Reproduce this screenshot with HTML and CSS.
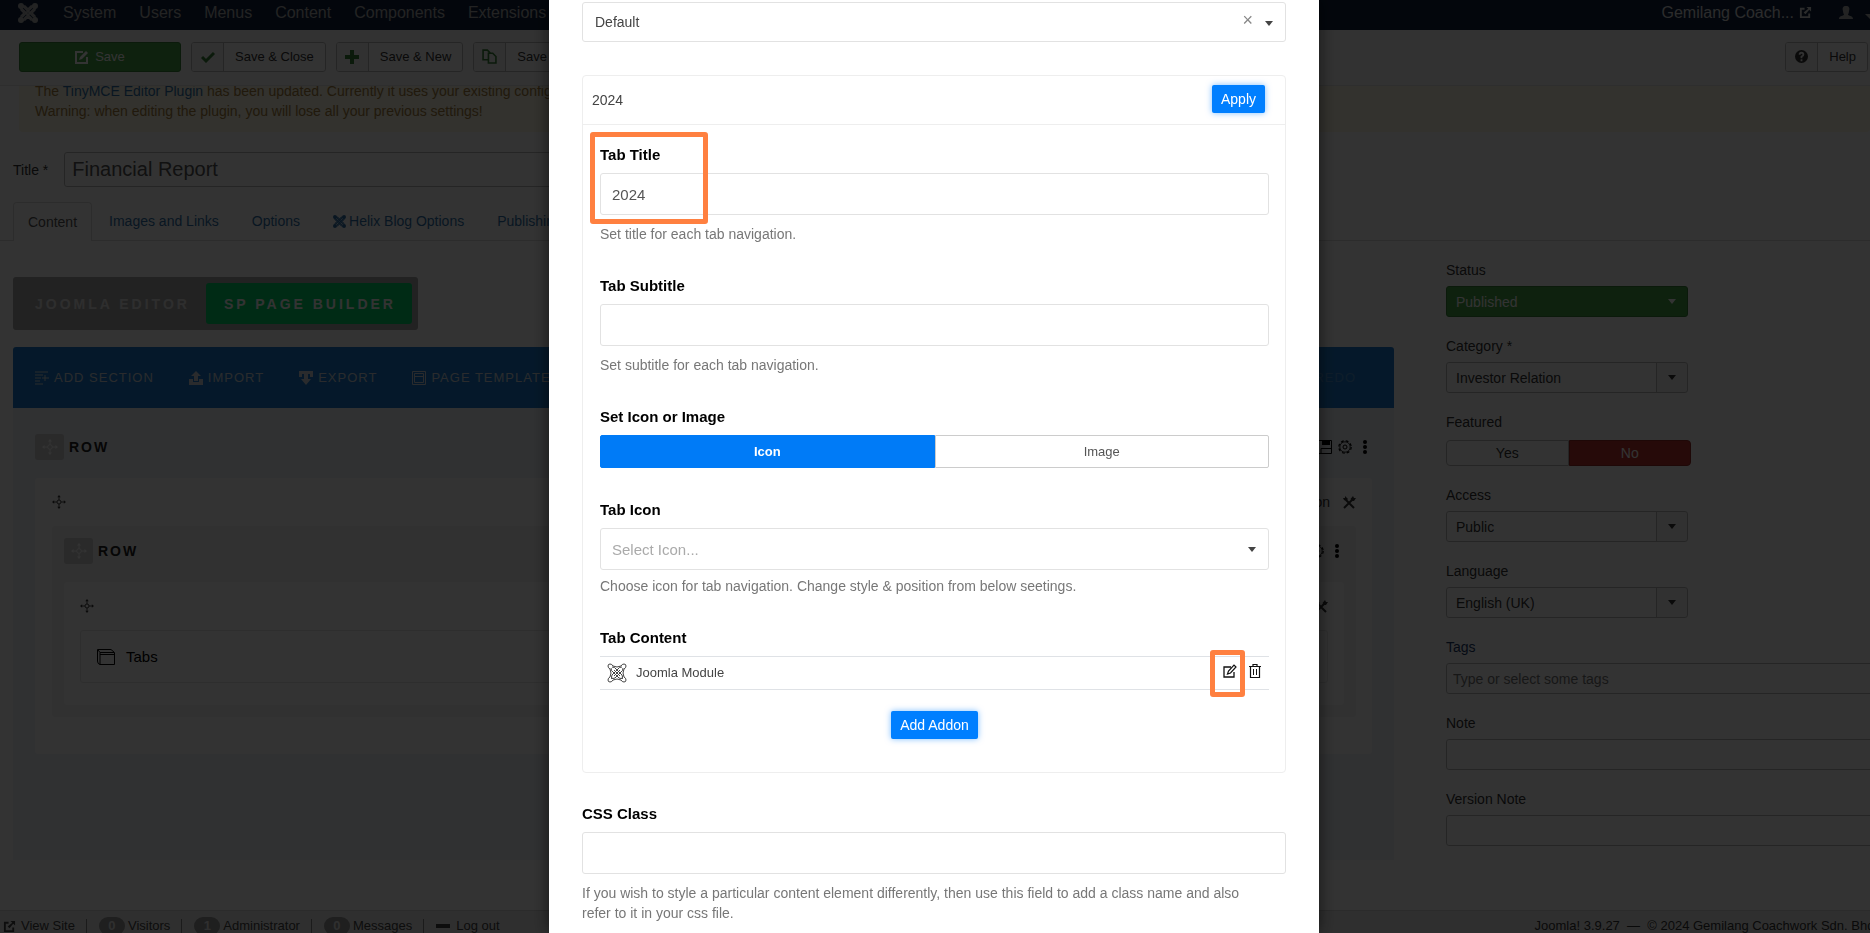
FILE: index.html
```
<!DOCTYPE html>
<html lang="en">
<head>
    <meta charset="UTF-8">
    <meta name="viewport" content="width=device-width, initial-scale=1.0">
    <title>Articles: Edit - Financial Report</title>
    <link rel="stylesheet" href="styles.css">
</head>
<body>

<!-- Icons -->
<svg width="0" height="0" class="icon-defs">
    <symbol id="joomla" viewBox="0 0 20 20">
        <path d="M5 3 L16 14 M3 5 L14 16 M15 3 L4 14 M17 5 L6 16" fill="none" stroke="currentColor" stroke-width="2"/>
        <path d="M3 3 V7 L6 10 L3 13 V17 H7 L10 14 L13 17 H17 V13 L14 10 L17 7 V3 H13 L10 6 L7 3 Z" fill="none" stroke="currentColor" stroke-width="1.5"/>
        <g fill="currentColor">
            <circle cx="3" cy="3" r="3"/><circle cx="17" cy="3" r="3"/><circle cx="3" cy="17" r="3"/><circle cx="17" cy="17" r="3"/>
        </g>
    </symbol>
    <symbol id="joomla-outline" viewBox="0 0 20 20">
        <g fill="none" stroke="currentColor" stroke-width="1">
            <path d="M1 3 Q1 1 3 1 Q5 1 6 3 Q10 5 14 3 Q15 1 17 1 Q19 1 19 3 Q19 5 17 6 Q15 10 17 14 Q19 15 19 17 Q19 19 17 19 Q15 19 14 17 Q10 15 6 17 Q5 19 3 19 Q1 19 1 17 Q1 15 3 14 Q5 10 3 6 Q1 5 1 3 Z"/>
            <path d="M4 5 Q4 8 6 9 L12 15 Q14 16 16 15 M5 4 Q8 4 9 6 L15 12 Q16 14 15 16 M15 4 Q12 4 11 6 L5 12 Q4 14 5 16 M16 5 Q16 8 14 9 L8 15 Q6 16 4 15 M7 7 L13 13 M13 7 L7 13"/>
        </g>
    </symbol>
    <symbol id="external" viewBox="0 0 14 14">
        <path d="M6 3 H2 V12 H11 V8" fill="none" stroke="currentColor" stroke-width="2"/>
        <path d="M8 1 H13 V6 L11 4 L7 9 L5 7 L10 3 Z" fill="currentColor"/>
    </symbol>
    <symbol id="user" viewBox="0 0 14 14">
        <path d="M7 0 C10 0 11 2 10 5 C10 7 9 8 9 9 C11 10 14 10 14 13 H0 C0 10 3 10 5 9 C5 8 4 7 4 5 C3 2 4 0 7 0 Z" fill="currentColor"/>
    </symbol>
    <symbol id="save-edit" viewBox="0 0 14 14">
        <path d="M8 2 H1 V13 H12 V7" fill="none" stroke="currentColor" stroke-width="2"/>
        <path d="M4 10 L5 7 L11 1 L13 3 L7 9 Z" fill="currentColor"/>
    </symbol>
    <symbol id="check" viewBox="0 0 14 14">
        <path d="M1 7 L5 11 L13 3" fill="none" stroke="currentColor" stroke-width="3"/>
    </symbol>
    <symbol id="plus" viewBox="0 0 14 14">
        <path d="M7 0 V14 M0 7 H14" fill="none" stroke="currentColor" stroke-width="4"/>
    </symbol>
    <symbol id="copy" viewBox="0 0 14 14">
        <path d="M6 10 H1 V1 H5 L8 4 M6 4 H10 L13 7 V13 H6 Z" fill="none" stroke="currentColor" stroke-width="1.5"/>
    </symbol>
    <symbol id="help" viewBox="0 0 14 14">
        <circle cx="7" cy="7" r="7" fill="currentColor"/>
        <path d="M5 5 Q5 3 7 3 Q9 3 9 5 Q9 6 7 7 V9 M7 10 V12" fill="none" stroke="#f3f3f3" stroke-width="2"/>
    </symbol>
    <symbol id="add-section" viewBox="0 0 14 14">
        <path d="M0 1 H13 M0 4 H8 M0 7 H6 M0 10 H5 M0 13 H8 M7 7 H14 M10 4 V10" fill="none" stroke="currentColor" stroke-width="1"/>
    </symbol>
    <symbol id="import" viewBox="0 0 14 14">
        <path d="M7 0 L12 5 H9 V10 H5 V5 H2 Z M0 8 H4 V11 H10 V8 H14 V14 H0 Z" fill="currentColor"/>
    </symbol>
    <symbol id="export" viewBox="0 0 14 14">
        <path d="M0 0 H14 V6 H11 V3 H9 V8 H12 L7 14 L2 8 H5 V3 H3 V6 H0 Z" fill="currentColor"/>
    </symbol>
    <symbol id="template" viewBox="0 0 14 14">
        <path d="M0.5 0.5 H13.5 V13.5 H0.5 Z M2.5 2.5 H11.5 V11.5 H2.5 Z M2.5 5.5 H11.5" fill="none" stroke="currentColor" stroke-width="1"/>
    </symbol>
    <symbol id="move" viewBox="0 0 16 16">
        <path d="M8 2 V6 M8 10 V14 M2 8 H6 M10 8 H14" stroke="currentColor" stroke-width="1"/>
        <circle cx="8" cy="8" r="2.3" fill="none" stroke="currentColor" stroke-width="1"/>
        <path d="M8 0 L10 2.500 H6 Z M8 16 L6 13.500 H10 Z M0 8 L2.500 6 V10 Z M16 8 L13.500 10 V6 Z" fill="currentColor"/>
    </symbol>
    <symbol id="floppy" viewBox="0 0 14 14">
        <path d="M0.5 0.5 H13.5 V13.5 H0.5 Z M3 13 V8.5 H13" fill="none" stroke="currentColor" stroke-width="1"/>
        <path d="M4 1 H12 V5 H4 Z" fill="currentColor"/>
    </symbol>
    <symbol id="gear" viewBox="0 0 14 14">
        <circle cx="7" cy="7" r="6.200" fill="none" stroke="currentColor" stroke-width="1.200" stroke-dasharray="2.800 2.070"/>
        <circle cx="7" cy="7" r="5.200" fill="none" stroke="currentColor" stroke-width="0.800"/>
        <circle cx="7" cy="7" r="2" fill="none" stroke="currentColor"/>
    </symbol>
    <symbol id="dots" viewBox="0 0 4 14">
        <circle cx="2" cy="2" r="2" fill="currentColor"/><circle cx="2" cy="7" r="2" fill="currentColor"/><circle cx="2" cy="12" r="2" fill="currentColor"/>
    </symbol>
    <symbol id="tools" viewBox="0 0 14 14">
        <path d="M2 13 L10 5 M12 13 L4 5" stroke="currentColor" stroke-width="2"/>
        <path d="M8.500 4 L11 1 L12 3 L14 3 L12 6 L10 6 Z M1 3 L3 3 L3 1 L6 4 L4 6 L2 5 Z" fill="currentColor"/>
    </symbol>
    <symbol id="window" viewBox="0 0 18 16">
        <path d="M3 15.500 Q0.500 15 0.500 12 V0.500 H14 L17.500 3.500 V15.500 H3 V3.500 H17 M1 1 L3 3.500 M3 5.500 H17" fill="none" stroke="currentColor" stroke-width="1"/>
    </symbol>
    <symbol id="pencil" viewBox="0 0 14 14">
        <path d="M8 3 H1 V13 H11 V8" fill="none" stroke="currentColor" stroke-width="1.300"/>
        <path d="M4.500 10 L5.500 7 L11 1 L13 3 L7.500 9 Z" fill="none" stroke="currentColor" stroke-width="1.200"/>
    </symbol>
    <symbol id="trash" viewBox="0 0 12 14">
        <path d="M0 2.500 H12 M4 2.500 V0.500 H8 V2.500 M1.500 3 V13.500 H10.500 V3" fill="none" stroke="currentColor" stroke-width="1.200"/>
        <path d="M4.500 5 V11 M7.500 5 V11" stroke="currentColor" stroke-width="1"/>
    </symbol>
</svg>

<div class="page">
    <!-- Top menu -->
    <nav class="navbar">
        <a href="#" class="brand" aria-label="Joomla"><svg width="20" height="20"><use href="#joomla"/></svg></a>
        <a href="#">System</a>
        <a href="#">Users</a>
        <a href="#">Menus</a>
        <a href="#">Content</a>
        <a href="#">Components</a>
        <a href="#">Extensions</a>
        <a href="#" class="site-name">Gemilang Coach... <svg width="13" height="13"><use href="#external"/></svg></a>
        <a href="#" class="user-menu" aria-label="User menu"><svg width="14" height="14"><use href="#user"/></svg><span class="caret"></span></a>
    </nav>

    <!-- Toolbar -->
    <div class="subhead">
        <button class="btn btn-save"><svg width="14" height="14"><use href="#save-edit"/></svg>Save</button>
        <button class="btn"><span class="btn-icon green"><svg width="14" height="14"><use href="#check"/></svg></span><span class="btn-text">Save &amp; Close</span></button>
        <button class="btn"><span class="btn-icon green"><svg width="14" height="14"><use href="#plus"/></svg></span><span class="btn-text">Save &amp; New</span></button>
        <button class="btn"><span class="btn-icon green"><svg width="15" height="15"><use href="#copy"/></svg></span><span class="btn-text">Save as Copy</span></button>
        <button class="btn btn-help"><span class="btn-icon"><svg width="13" height="13"><use href="#help"/></svg></span><span class="btn-text">Help</span></button>
    </div>

    <div class="alert">
        The <a href="#">TinyMCE Editor Plugin</a> has been updated. Currently it uses your existing configuration.<br>
        Warning: when editing the plugin, you will lose all your previous settings!
    </div>

    <div class="title-row">
        <label for="title">Title *</label>
        <input type="text" id="title" value="Financial Report">
    </div>

    <div class="tabs">
        <a href="#" class="active">Content</a>
        <a href="#">Images and Links</a>
        <a href="#">Options</a>
        <a href="#"><svg width="13" height="13"><use href="#joomla"/></svg> Helix Blog Options</a>
        <a href="#">Publishing</a>
    </div>

    <div class="columns">
        <div class="editor">
            <div class="switcher">
                <button>JOOMLA EDITOR</button>
                <button class="active">SP PAGE BUILDER</button>
            </div>

            <!-- Page builder -->
            <div class="builder-bar">
                <a href="#"><svg width="14" height="14"><use href="#add-section"/></svg>ADD SECTION</a>
                <a href="#"><svg width="14" height="14"><use href="#import"/></svg>IMPORT</a>
                <a href="#"><svg width="14" height="14"><use href="#export"/></svg>EXPORT</a>
                <a href="#"><svg width="14" height="14"><use href="#template"/></svg>PAGE TEMPLATES</a>
                <a href="#" class="redo">REDO</a>
            </div>
            <div class="builder">
                <div class="row-head">
                    <span class="handle"><svg width="16" height="16"><use href="#move"/></svg></span>
                    <strong>ROW</strong>
                    <span class="row-tools">
                        <svg width="14" height="14"><use href="#floppy"/></svg>
                        <svg width="14" height="14"><use href="#gear"/></svg>
                        <svg width="14" height="14"><use href="#dots"/></svg>
                    </span>
                </div>
                <div class="column">
                    <div class="column-head">
                        <svg width="14" height="14"><use href="#move"/></svg>
                        <span class="column-tools">Add Addon <svg width="14" height="14"><use href="#tools"/></svg></span>
                    </div>
                    <div class="inner-row">
                        <div class="row-head">
                            <span class="handle"><svg width="16" height="16"><use href="#move"/></svg></span>
                            <strong>ROW</strong>
                            <span class="row-tools">
                                <svg width="14" height="14"><use href="#gear"/></svg>
                                <svg width="14" height="14"><use href="#dots"/></svg>
                            </span>
                        </div>
                        <div class="inner-column">
                            <div class="column-head">
                                <svg width="14" height="14"><use href="#move"/></svg>
                                <span class="column-tools"><svg width="14" height="14"><use href="#tools"/></svg></span>
                            </div>
                            <div class="addon"><svg width="18" height="16"><use href="#window"/></svg>Tabs</div>
                        </div>
                    </div>
                </div>
            </div>
        </div>

        <!-- Article options -->
        <div class="sidebar">
            <div class="group">
                <label for="status">Status</label>
                <div class="picker published"><select id="status"><option>Published</option></select></div>
            </div>
            <div class="group">
                <label for="category">Category *</label>
                <div class="picker"><select id="category"><option>Investor Relation</option></select></div>
            </div>
            <div class="group">
                <span class="group-label">Featured</span>
                <div class="yes-no">
                    <button>Yes</button>
                    <button class="no">No</button>
                </div>
            </div>
            <div class="group">
                <label for="access">Access</label>
                <div class="picker"><select id="access"><option>Public</option></select></div>
            </div>
            <div class="group">
                <label for="language">Language</label>
                <div class="picker"><select id="language"><option>English (UK)</option></select></div>
            </div>
            <div class="group">
                <label for="tags" class="blue">Tags</label>
                <input type="text" id="tags" placeholder="Type or select some tags">
            </div>
            <div class="group">
                <label for="note">Note</label>
                <input type="text" id="note">
            </div>
            <div class="group">
                <label for="version-note">Version Note</label>
                <input type="text" id="version-note">
            </div>
        </div>
    </div>

    <!-- Status bar -->
    <footer class="footer">
        <a href="#"><svg width="13" height="13"><use href="#external"/></svg>View Site</a>
        <span class="item"><span class="badge">0</span>Visitors</span>
        <span class="item"><span class="badge">1</span>Administrator</span>
        <span class="item"><span class="badge">0</span>Messages</span>
        <a href="#" class="item"><span class="dash"></span>Log out</a>
        <span class="copyright">Joomla! 3.9.27 &nbsp;—&nbsp; © 2024 Gemilang Coachwork Sdn. Bhd.</span>
    </footer>
</div>

<!-- Addon settings -->
<div class="overlay">
    <div class="modal">
        <div class="select-box">
            <select class="small" aria-label="Style"><option>Default</option></select>
            <button class="clear" aria-label="Clear">×</button>
        </div>

        <div class="panel">
            <div class="panel-head">
                <span>2024</span>
                <button class="primary">Apply</button>
            </div>
            <div class="panel-body">
                <div class="field">
                    <label for="tab-title">Tab Title</label>
                    <input type="text" id="tab-title" value="2024">
                    <p>Set title for each tab navigation.</p>
                    <span class="mark mark-title"></span>
                </div>
                <div class="field">
                    <label for="tab-subtitle">Tab Subtitle</label>
                    <input type="text" id="tab-subtitle">
                    <p>Set subtitle for each tab navigation.</p>
                </div>
                <div class="field">
                    <span class="label">Set Icon or Image</span>
                    <div class="choice">
                        <button class="active">Icon</button>
                        <button>Image</button>
                    </div>
                </div>
                <div class="field">
                    <label for="tab-icon">Tab Icon</label>
                    <div class="select-box icon-select">
                        <select id="tab-icon"><option>Select Icon...</option></select>
                    </div>
                    <p class="close">Choose icon for tab navigation. Change style &amp; position from below seetings.</p>
                </div>
                <div class="field">
                    <span class="label">Tab Content</span>
                    <div class="module">
                        <svg width="20" height="20"><use href="#joomla-outline"/></svg>
                        <span>Joomla Module</span>
                        <button class="edit" aria-label="Edit"><svg width="14" height="14"><use href="#pencil"/></svg><span class="mark mark-edit"></span></button>
                        <button aria-label="Delete"><svg width="12" height="14"><use href="#trash"/></svg></button>
                    </div>
                    <div class="add"><button class="primary">Add Addon</button></div>
                </div>
            </div>
        </div>

        <div class="field css-field">
            <label for="css-class">CSS Class</label>
            <input type="text" id="css-class">
            <p>If you wish to style a particular content element differently, then use this field to add a class name and also refer to it in your css file.</p>
        </div>
    </div>
</div>

</body>
</html>
```

FILE: styles.css
```
* {
    box-sizing: border-box;
}

body {
    font-family: "Liberation Sans", Arial, sans-serif;
    font-size: 14px;
    line-height: 20px;
    margin: 0;
    height: 100vh;
    overflow: hidden;
    color: #333;
    background-color: #fff;
}

a {
    color: #3071a9;
    text-decoration: none;
}

button,
input,
select {
    font-family: inherit;
    font-size: 14px;
    margin: 0;
}

svg {
    flex: none;
}

.icon-defs {
    position: absolute;
}

.page {
    height: 100vh;
    display: flex;
    flex-direction: column;
    overflow: hidden;
}

/* Top menu */
.navbar {
    display: flex;
    align-items: center;
    gap: 23px;
    flex: none;
    height: 30px;
    padding: 0 0 5px 18px;
    background-color: #10223e;
    font-size: 16px;
    white-space: nowrap;
}

.navbar a {
    color: #b0b0b0;
}

.navbar .brand {
    display: flex;
    margin-right: 2px;
}

.navbar .site-name {
    margin-left: auto;
    display: flex;
    align-items: center;
    gap: 5px;
    color: #d9d9d9;
}

.user-menu {
    display: flex;
    align-items: center;
    gap: 12px;
    margin: 0 -5px 0 4px;
}

.caret {
    margin-top: 7px;
    border: 5px solid transparent;
    border-top-color: currentColor;
    border-bottom: none;
}

/* Toolbar */
.subhead {
    position: relative;
    z-index: 1;
    display: flex;
    align-items: center;
    gap: 10px;
    flex: none;
    height: 56px;
    padding: 0 2px 2px 19px;
    background-color: #fafafa;
    border-bottom: 1px solid #e3e3e3;
}

.btn {
    display: flex;
    align-items: center;
    height: 30px;
    padding: 0;
    border: 1px solid #bbb;
    border-radius: 3px;
    background-color: #fff;
    font-size: 13px;
    color: #333;
    overflow: hidden;
    white-space: nowrap;
}

.btn-save {
    justify-content: center;
    gap: 6px;
    width: 162px;
    background-color: #46a546;
    border-color: #378137;
    color: #fff;
}

.btn-icon {
    display: flex;
    align-items: center;
    justify-content: center;
    width: 32px;
    height: 28px;
    background-color: #f3f3f3;
    border-right: 1px solid #bbb;
}

.btn-icon.green {
    color: #378137;
}

.btn-text {
    padding: 0 11px;
}

.btn-help {
    margin-left: auto;
}

.alert {
    flex: none;
    margin: -5px 0 0 19px;
    padding: 0 16px 11px;
    background-color: #fcf8e3;
    border-radius: 0 0 4px 4px;
    color: #a47e3c;
}

.title-row {
    display: flex;
    align-items: center;
    flex: none;
    gap: 16px;
    width: 66%;
    margin: 20px 0 15px 13px;
}

.title-row input {
    flex: 1;
    height: 35px;
    padding: 0 7px;
    border: 1px solid #bbb;
    border-radius: 3px;
    font-size: 20px;
    color: #555;
}

.tabs {
    display: flex;
    flex: none;
    height: 39px;
    padding-left: 13px;
    border-bottom: 1px solid #ddd;
}

.tabs a {
    display: flex;
    align-items: center;
    gap: 3px;
    padding: 0 16px;
    margin-right: 1px;
}

.tabs a.active {
    margin: 0 1px -1px 0;
    padding: 0 14px;
    border: 1px solid #ddd;
    border-bottom: none;
    border-radius: 4px 4px 0 0;
    background-color: #fff;
    color: #555;
}

/* Main area */
.columns {
    display: grid;
    grid-template-columns: minmax(0, 1fr) 440px;
    gap: 52px;
    flex: 1;
    margin: 0 -16px 0 13px;
    min-height: 0;
}

.editor {
    padding-top: 36px;
}

.switcher {
    display: flex;
    width: fit-content;
    padding: 6px;
    border-radius: 3px;
    background-color: #aaa;
}

.switcher button {
    height: 41px;
    padding: 0 16px;
    border: none;
    border-radius: 3px;
    background-color: transparent;
    color: #e6e6e6;
    font-weight: bold;
    letter-spacing: 3px;
}

.switcher .active {
    padding: 0 16px 0 18px;
    background-color: #00d56b;
    color: #fff;
}

.builder-bar {
    display: flex;
    align-items: center;
    gap: 35px;
    height: 61px;
    margin-top: 17px;
    padding: 0 38px 0 22px;
    border-radius: 3px 3px 0 0;
    background-color: #1b7bd0;
    font-size: 13px;
    letter-spacing: 1px;
}

.builder-bar a {
    display: flex;
    align-items: center;
    gap: 5px;
    color: #d0d8e0;
}

.builder-bar .redo {
    margin-left: auto;
    color: #4b92d4;
}

.builder {
    height: 452px;
    padding: 26px 22px;
    background-color: #eff3f7;
}

.row-head {
    display: flex;
    align-items: center;
    gap: 5px;
    height: 26px;
    color: #222;
    letter-spacing: 2px;
}

.handle {
    display: flex;
    align-items: center;
    justify-content: center;
    width: 29px;
    height: 26px;
    border-radius: 3px;
    background-color: #d0d0d0;
    color: #fff;
}

.row-tools {
    display: flex;
    gap: 6px;
    margin-left: auto;
    color: #000;
}

.column {
    height: 276px;
    margin-top: 18px;
    padding: 0 16px 0 17px;
    border-radius: 3px;
    background-color: #fff;
}

.column-head {
    display: flex;
    align-items: center;
    justify-content: space-between;
    height: 48px;
}

.column-tools {
    display: flex;
    align-items: center;
    gap: 12px;
}

.inner-row {
    padding: 12px;
    border-radius: 3px;
    background-color: #f3f3f3;
}

.inner-column {
    margin-top: 18px;
    padding: 0 16px 22px;
    border-radius: 3px;
    background-color: #fff;
}

.addon {
    display: flex;
    align-items: center;
    gap: 11px;
    height: 53px;
    padding: 0 16px;
    border: 1px solid #e6e6e6;
    border-radius: 3px;
    font-size: 15px;
    color: #000;
}

/* Article options */
.sidebar {
    padding-top: 19px;
}

.group {
    margin-bottom: 19px;
}

.group label,
.group-label {
    display: block;
    margin-bottom: 6px;
}

.group .blue {
    color: #1a3867;
}

.group input {
    display: block;
    width: 100%;
    height: 31px;
    padding: 0 6px;
    border: 1px solid #bbb;
    border-radius: 3px;
}

.picker {
    position: relative;
    width: 242px;
}

.picker select {
    display: block;
    width: 100%;
    height: 31px;
    padding: 0 9px;
    border: 1px solid #bbb;
    border-radius: 3px;
    background: linear-gradient(to left, #f5f5f5 30px, #bbb 30px, #bbb 31px, #fff 31px);
    color: #333;
    appearance: none;
}

.picker::after {
    content: "";
    position: absolute;
    right: 12px;
    top: 13px;
    border: 4px solid transparent;
    border-top: 5px solid #333;
    border-bottom: none;
}

.published select {
    background: #46a546;
    border-color: #378137;
    color: #fff;
}

.published::after {
    border-top-color: #fff;
}

.yes-no {
    display: flex;
    width: 245px;
    padding-top: 2px;
}

.yes-no button {
    flex: 1;
    height: 26px;
    padding: 0;
    border: 1px solid #bbb;
    border-radius: 4px 0 0 4px;
    background-color: #fff;
    color: #333;
}

.yes-no .no {
    border-color: #942a25;
    border-radius: 0 4px 4px 0;
    background-color: #bd362f;
    color: #fff;
}

/* Status bar */
.footer {
    display: flex;
    flex: none;
    height: 23px;
    margin-right: -8px;
    padding: 5px 0 0 3px;
    border-top: 1px solid #d4d4d4;
    background-color: #ebebeb;
    font-size: 13px;
    white-space: nowrap;
}

.footer a {
    display: flex;
    align-items: center;
    gap: 5px;
    height: 20px;
    color: #444;
}

.footer .item {
    display: flex;
    align-items: center;
    gap: 3px;
    height: 20px;
    color: #444;
}

.footer .item::before {
    content: "";
    width: 1px;
    height: 14px;
    margin: 0 9px 0 11px;
    background-color: #888;
}

.badge {
    width: 26px;
    height: 18px;
    border-radius: 9px;
    background-color: #999;
    color: #ebebeb;
    font-weight: bold;
    line-height: 18px;
    text-align: center;
}

.dash {
    width: 14px;
    height: 4px;
    margin-right: 3px;
    background-color: #444;
}

.copyright {
    margin-left: auto;
}

/* Settings window */
.overlay {
    position: fixed;
    inset: 0;
    z-index: 2;
    display: flex;
    justify-content: center;
    padding-right: 2px;
    background-color: rgba(0, 0, 0, 0.8);
}

.modal {
    width: 770px;
    padding: 2px 33px 0;
    overflow: hidden;
    background-color: #fff;
    box-shadow: 0 0 16px rgba(0, 0, 0, 0.6);
}

.select-box {
    position: relative;
}

.select-box::after {
    content: "";
    position: absolute;
    right: 13px;
    top: 19px;
    border: 4px solid transparent;
    border-top: 5px solid #444;
    border-bottom: none;
}

.select-box select,
.field input {
    display: block;
    width: 100%;
    height: 42px;
    padding: 0 11px;
    border: 1px solid #e2e2e2;
    border-radius: 3px;
    background-color: #fff;
    color: #555;
    font-size: 15px;
    appearance: none;
}

.select-box .small {
    height: 40px;
    padding: 0 12px;
    color: #444;
    font-size: 14px;
}

.icon-select select {
    color: #aaa;
}

.clear {
    position: absolute;
    right: 33px;
    top: 6px;
    padding: 0;
    border: none;
    background: none;
    color: #888;
    font-size: 18px;
    line-height: 24px;
}

.panel {
    margin: 33px 0 31px;
    border: 1px solid #eee;
    border-radius: 4px;
}

.panel-head {
    display: flex;
    justify-content: space-between;
    align-items: center;
    height: 49px;
    padding: 0 20px 0 9px;
    border-bottom: 1px solid #eee;
    color: #444;
}

.panel-head .primary {
    margin-bottom: 2px;
}

.primary {
    height: 28px;
    padding: 0 9px 1px;
    border: none;
    border-radius: 2px;
    background-color: #007fff;
    box-shadow: 0 0 6px rgba(0, 127, 255, 0.5);
    color: #fff;
}

.panel-body {
    padding: 20px 16px 33px 17px;
}

.field {
    position: relative;
    margin-bottom: 32px;
}

.panel-body .field:last-child {
    margin-bottom: 0;
}

.field label,
.field .label {
    display: block;
    margin-bottom: 8px;
    color: #000;
    font-size: 15px;
    font-weight: bold;
}

.field p {
    margin: 9px 0 0;
    color: #777;
}

.field .close {
    margin-top: 6px;
}

.css-field p {
    padding-right: 24px;
}

.choice {
    display: flex;
}

.choice button {
    flex: 1;
    height: 33px;
    padding: 0;
    border: 1px solid #ccc;
    border-radius: 0 2px 2px 0;
    background-color: #fff;
    color: #555;
    font-size: 13px;
}

.choice .active {
    border-color: #007bf7;
    border-radius: 2px 0 0 2px;
    background-color: #007bf7;
    color: #fff;
    font-weight: bold;
}

.module {
    display: flex;
    align-items: center;
    height: 34px;
    padding: 0 8px 0 7px;
    border-top: 1px solid #dfe2e6;
    border-bottom: 1px solid #dfe2e6;
    color: #444;
    font-size: 13px;
}

.module span {
    margin-left: 9px;
}

.module button {
    display: flex;
    margin: 0 0 4px 12px;
    padding: 0;
    border: none;
    background: none;
    color: #111;
}

.module .edit {
    position: relative;
    margin-left: auto;
}

.add {
    margin-top: 21px;
    text-align: center;
}

/* Orange frames over the parts to look at */
.mark {
    position: absolute;
    border: 5px solid #ff8040;
    border-radius: 3px;
    pointer-events: none;
}

.mark-title {
    left: -10px;
    top: -13px;
    width: 118px;
    height: 92px;
}

.module .mark-edit {
    left: -13px;
    top: -14px;
    width: 35px;
    height: 47px;
    margin: 0;
}
```
